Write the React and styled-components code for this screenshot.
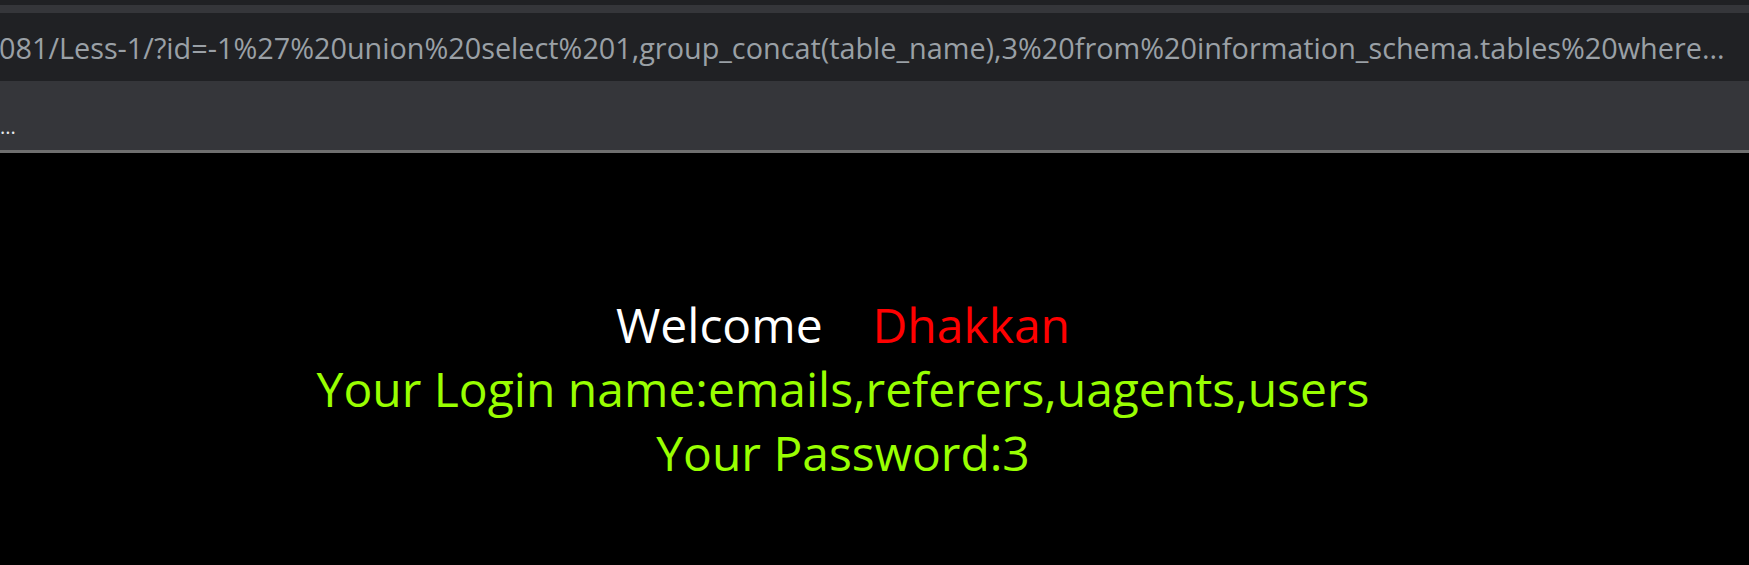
import React from 'react'
import styled, {createGlobalStyle} from 'styled-components'

const GlobalStyle = createGlobalStyle`
  html, body {
    margin: 0;
    padding: 0;
    background: #000;
  }
  body {
    font-family: 'Open Sans', 'Noto Sans', sans-serif;
  }
`

const url = '081/Less-1/?id=-1%27%20union%20select%201,group_concat(table_name),3%20from%20information_schema.tables%20where...'

export default function App() {
  return (
    <Page>
      <GlobalStyle />
      <Chrome>
        <TabEdge />
        <TabStrip />
        <UrlBar>
          <UrlText>{url}</UrlText>
        </UrlBar>
        <Bookmarks>
          <BookmarkLabel>...</BookmarkLabel>
        </Bookmarks>
      </Chrome>
      <Content>
        <Greeting>
          Welcome&nbsp;&nbsp;&nbsp; <Name>Dhakkan</Name>
        </Greeting>
        <Result>Your Login name:emails,referers,uagents,users</Result>
        <Result>Your Password:3</Result>
      </Content>
    </Page>
  )
}

const Page = styled.div`
  width: 1749px;
  height: 565px;
  overflow: hidden;
  display: flex;
  flex-direction: column;
  background: #000;
`
const Chrome = styled.header`
  display: flex;
  flex-direction: column;
`
const TabEdge = styled.div`
  height: 5px;
  background: #202124;
`
const TabStrip = styled.div`
  height: 8px;
  background: #35363a;
`
const UrlBar = styled.div`
  height: 68px;
  background: #202124;
  display: flex;
  align-items: center;
  overflow: hidden;
`
const UrlText = styled.span`
  margin-left: -1px;
  font-size: 28.8px;
  color: #9aa0a6;
  white-space: nowrap;
`
const Bookmarks = styled.div`
  height: 72px;
  background: #35363a;
  border-bottom: 3px solid #6f6f6f;
  display: flex;
  align-items: center;
  padding-top: 22px;
  box-sizing: border-box;
`
const BookmarkLabel = styled.span`
  margin-left: 0;
  font-size: 20px;
  line-height: 20px;
  color: #e8eaed;
`
const Content = styled.main`
  flex: 1;
  display: flex;
  flex-direction: column;
  align-items: center;
  padding-top: 140px;
  padding-right: 63px;
  font-size: 48px;
  line-height: 64px;
  text-align: center;
`
const Greeting = styled.div`
  color: #fff;
  white-space: nowrap;
`
const Name = styled.span`
  color: #ff0000;
`
const Result = styled.div`
  color: #99ff00;
  white-space: nowrap;
`
